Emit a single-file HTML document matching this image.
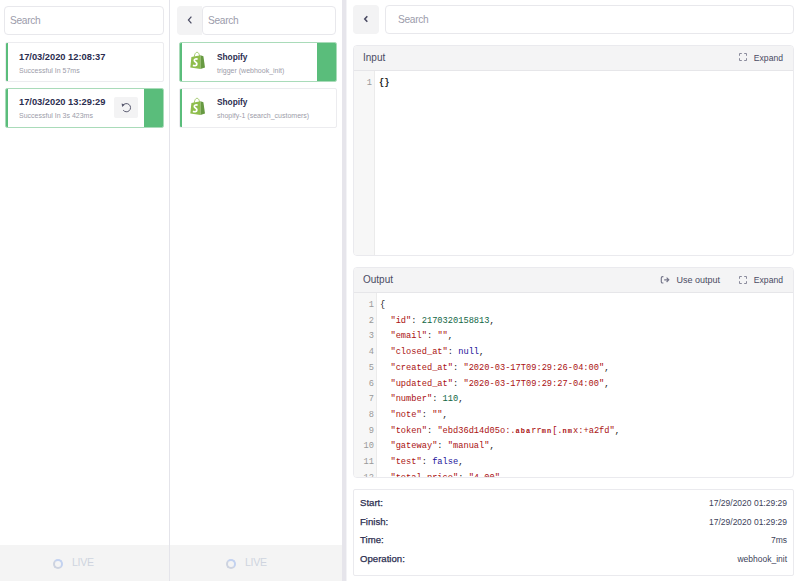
<!DOCTYPE html>
<html><head><meta charset="utf-8">
<style>
*{box-sizing:border-box;margin:0;padding:0}
html,body{width:800px;height:581px;overflow:hidden;background:#fff;font-family:"Liberation Sans",sans-serif;color:#2b2d4f;-webkit-font-smoothing:antialiased}
.abs{position:absolute}
.search{position:absolute;border:1px solid #e8e8ec;border-radius:4px;background:#fff;color:#9c9cab;font-size:10.2px;letter-spacing:-0.3px;line-height:27px;padding-left:5px}
.divider{position:absolute;top:0;height:581px;width:1px;background:#e4e4ea}
.card{position:absolute;border:1px solid #ececef;border-radius:2px;background:#fff;overflow:hidden}
.card .lb{position:absolute;left:-1px;top:-1px;bottom:-1px;width:3px;background:#5abd7b;border-radius:2px 0 0 2px}
.card.sel{border-color:#a9dbb9}
.card .rb{position:absolute;right:-1px;top:-1px;bottom:-1px;width:20px;background:#5abd7b}
.t1{position:absolute;font-weight:bold;font-size:9.3px;color:#2b2d4f;white-space:nowrap}
.t2{position:absolute;font-size:7px;color:#9c9ca9;white-space:nowrap}
.back{position:absolute;background:#f3f3f4;border-radius:4px 0 0 4px}
.footer{position:absolute;top:545px;height:36px;background:#f4f4f4}
.live{position:absolute;top:556px;font-size:10.6px;letter-spacing:-0.3px;color:#cfd4df}
.ring{position:absolute;top:559px;width:10px;height:10px;border-radius:50%;border:2.4px solid #c3d2f0;border-left-color:#cdd3e0;border-bottom-color:#cdd3e0}
.panel{position:absolute;left:353px;width:441px;border:1px solid #eaeaee;border-radius:4px;overflow:hidden;background:#fff}
.ph{position:absolute;left:0;right:0;top:0;height:25px;background:#f4f4f5;border-bottom:1px solid #e6e6e9}
.ph .h{position:absolute;left:9px;top:6px;font-size:10px;color:#4a4b63}
.gut{position:absolute;left:0;bottom:0;background:#f7f7f7;border-right:1px solid #ebebeb}
.code{position:absolute;font-family:"Liberation Mono",monospace;font-size:8.7px;line-height:15.7px;white-space:pre;color:#1a1a1a}
.ln{position:absolute;font-family:"Liberation Mono",monospace;font-size:8.7px;line-height:15.7px;white-space:pre;color:#999;text-align:right}
.s{color:#a11}.n{color:#164}.k{color:#219}.g{font-weight:bold;font-size:7px;letter-spacing:1.02px}
.act{position:absolute;top:8px;font-size:8.6px;color:#4a4b63;white-space:nowrap}
.info{position:absolute;left:353px;top:489px;width:441px;height:87px;border:1px solid #eaeaee;border-radius:2px;background:#fff}
.il{position:absolute;left:6px;font-size:9.6px;color:#2b2d4f;-webkit-text-stroke:0.25px #2b2d4f}
.iv{position:absolute;right:6px;font-size:8.5px;color:#3d3f5a;text-align:right;white-space:nowrap}
</style></head><body>

<!-- Column 1 -->
<div class="search" style="left:4px;top:6px;width:160px;height:29px">Search</div>

<div class="card" style="left:5px;top:42px;width:159px;height:40px">
  <div class="lb"></div>
  <div class="t1" style="left:13px;top:9px">17/03/2020 12:08:37</div>
  <div class="t2" style="left:13px;top:24px">Successful In 57ms</div>
</div>
<div class="card sel" style="left:5px;top:88px;width:159px;height:40px">
  <div class="lb"></div>
  <div class="t1" style="left:13px;top:8px">17/03/2020 13:29:29</div>
  <div class="t2" style="left:13px;top:23px">Successful In 3s 423ms</div>
  <div class="abs" style="left:108px;top:8px;width:24px;height:21px;background:#f3f3f4;border-radius:2px"></div>
  <svg class="abs" style="left:114px;top:12px" width="12" height="12" viewBox="0 0 12 12"><path d="M3.1 4.3 A4.1 4.1 0 1 1 3.2 9.2" fill="none" stroke="#5a5b70" stroke-width="1"/><path d="M1.6 2.4 L4.9 3.6 L2.2 5.9 Z" fill="#5a5b70"/></svg>
  <div class="rb"></div>
</div>

<div class="divider" style="left:169px"></div>
<div class="footer" style="left:0;width:169px"></div>
<div class="ring" style="left:53px"></div>
<div class="live" style="left:72px">LIVE</div>

<!-- Column 2 -->
<div class="back" style="left:177px;top:6px;width:25px;height:29px"></div>
<svg class="abs" style="left:186px;top:15px" width="8" height="10" viewBox="0 0 8 10"><path d="M5.4 1.6 L2.4 5 L5.4 8.4" fill="none" stroke="#4a4b63" stroke-width="1.2"/></svg>
<div class="search" style="left:202px;top:6px;width:134px;height:29px">Search</div>

<div class="card sel" style="left:179px;top:42px;width:158px;height:40px">
  <div class="lb"></div>
  <svg class="abs" style="left:6px;top:5px" width="24" height="24" viewBox="0 0 24 24"><path d="M8.2 9 C8.6 5.6 10 4.2 11 4.2 C12.2 4.2 13.2 5.6 13.6 8.2" fill="none" stroke="#9cc563" stroke-width="0.9"/><path d="M5.4 8.9 L14.5 7.2 L14.5 21 L4.3 19.4 Z" fill="#8fbd4c"/><path d="M14.5 7.2 L17.4 8.3 L19 19.4 L14.5 21 Z" fill="#679a42"/><path d="M11.6 11.4 C10.5 10.6 8.2 10.8 8.3 12.5 C8.4 14.1 11 14 10.9 16 C10.8 18 8.3 18.1 7 17.2" fill="none" stroke="#fff" stroke-width="1.7"/></svg>
  <div class="t1" style="left:37px;top:9px;font-size:8.3px">Shopify</div>
  <div class="t2" style="left:37px;top:24px">trigger (webhook_init)</div>
  <div class="rb"></div>
</div>
<div class="card" style="left:179px;top:88px;width:158px;height:40px">
  <div class="lb"></div>
  <svg class="abs" style="left:6px;top:5px" width="24" height="24" viewBox="0 0 24 24"><path d="M8.2 9 C8.6 5.6 10 4.2 11 4.2 C12.2 4.2 13.2 5.6 13.6 8.2" fill="none" stroke="#9cc563" stroke-width="0.9"/><path d="M5.4 8.9 L14.5 7.2 L14.5 21 L4.3 19.4 Z" fill="#8fbd4c"/><path d="M14.5 7.2 L17.4 8.3 L19 19.4 L14.5 21 Z" fill="#679a42"/><path d="M11.6 11.4 C10.5 10.6 8.2 10.8 8.3 12.5 C8.4 14.1 11 14 10.9 16 C10.8 18 8.3 18.1 7 17.2" fill="none" stroke="#fff" stroke-width="1.7"/></svg>
  <div class="t1" style="left:37px;top:8px;font-size:8.3px">Shopify</div>
  <div class="t2" style="left:37px;top:23px">shopify-1 (search_customers)</div>
</div>

<div class="footer" style="left:170px;width:172px"></div>
<div class="ring" style="left:226px"></div>
<div class="live" style="left:245px">LIVE</div>

<div class="abs" style="left:342px;top:0;width:4px;height:581px;background:#e6e5eb"></div>
<div class="abs" style="left:346px;top:0;width:1px;height:581px;background:#f3f3f6"></div>

<!-- Column 3 -->
<div class="back" style="left:353px;top:5px;width:26px;height:29px;border-radius:4px"></div>
<svg class="abs" style="left:362px;top:14px" width="8" height="10" viewBox="0 0 8 10"><path d="M5.3 2.3 L2.8 5 L5.3 7.7" fill="none" stroke="#4a4b63" stroke-width="1.6"/></svg>
<div class="search" style="left:385px;top:5px;width:409px;height:29px;padding-left:12px">Search</div>

<div class="panel" style="top:45px;height:211px">
  <div class="ph"><div class="h">Input</div>
    <svg class="abs" style="left:385px;top:7px" width="10" height="10" viewBox="0 0 10 10"><path d="M0.5 2.8 V0.5 H2.8 M5.2 0.5 H7.5 V2.8 M7.5 5.2 V7.5 H5.2 M2.8 7.5 H0.5 V5.2" fill="none" stroke="#8a8b9c" stroke-width="1"/></svg>
    <div class="act" style="right:10px;top:7px">Expand</div>
  </div>
  <div class="gut" style="top:25px;width:21px"></div>
  <div class="ln" style="left:0;width:18px;top:30px">1</div>
  <div class="code" style="left:25px;top:30px;font-weight:bold">{}</div>
</div>

<div class="panel" style="top:267px;height:211px">
  <div class="ph"><div class="h">Output</div>
    <svg class="abs" style="left:306px;top:7px" width="11" height="10" viewBox="0 0 11 10"><path d="M3.4 1.6 H2.6 Q1.3 1.6 1.3 2.9 V6.7 Q1.3 8 2.6 8 H3.4" fill="none" stroke="#75768a" stroke-width="1.15"/><path d="M4.2 4.8 H8.8 M6.6 2.6 L8.8 4.8 L6.6 7" fill="none" stroke="#75768a" stroke-width="1.15"/></svg>
    <div class="act" style="right:73px;top:7px;font-size:9px">Use output</div>
    <svg class="abs" style="left:385px;top:8px" width="10" height="10" viewBox="0 0 10 10"><path d="M0.5 2.8 V0.5 H2.8 M5.2 0.5 H7.5 V2.8 M7.5 5.2 V7.5 H5.2 M2.8 7.5 H0.5 V5.2" fill="none" stroke="#8a8b9c" stroke-width="1"/></svg>
    <div class="act" style="right:10px;top:7px">Expand</div>
  </div>
  <div class="gut" style="top:25px;width:23px"></div>
  <div class="ln" style="left:0;width:20px;top:30px">1
2
3
4
5
6
7
8
9
10
11
12</div>
  <div class="code" style="left:26px;top:30px">{
  <span class="s">"id"</span>: <span class="n">2170320158813</span>,
  <span class="s">"email"</span>: <span class="s">""</span>,
  <span class="s">"closed_at"</span>: <span class="k">null</span>,
  <span class="s">"created_at"</span>: <span class="s">"2020-03-17T09:29:26-04:00"</span>,
  <span class="s">"updated_at"</span>: <span class="s">"2020-03-17T09:29:27-04:00"</span>,
  <span class="s">"number"</span>: <span class="n">110</span>,
  <span class="s">"note"</span>: <span class="s">""</span>,
  <span class="s">"token"</span>: <span class="s">"ebd36d14d05o:.<span class="g">aba</span>rr<span class="g">mn</span>[.<span class="g">nm</span>x:+a2fd"</span>,
  <span class="s">"gateway"</span>: <span class="s">"manual"</span>,
  <span class="s">"test"</span>: <span class="k">false</span>,
  <span class="s">"total_price"</span>: <span class="s">"4.00"</span>,</div>
</div>

<div class="info">
  <div class="il" style="top:7px">Start:</div>
  <div class="il" style="top:26px">Finish:</div>
  <div class="il" style="top:44px">Time:</div>
  <div class="il" style="top:63px">Operation:</div>
  <div class="iv" style="top:8px">17/29/2020 01:29:29</div>
  <div class="iv" style="top:27px">17/29/2020 01:29:29</div>
  <div class="iv" style="top:45px">7ms</div>
  <div class="iv" style="top:64px">webhook_init</div>
</div>

</body></html>
